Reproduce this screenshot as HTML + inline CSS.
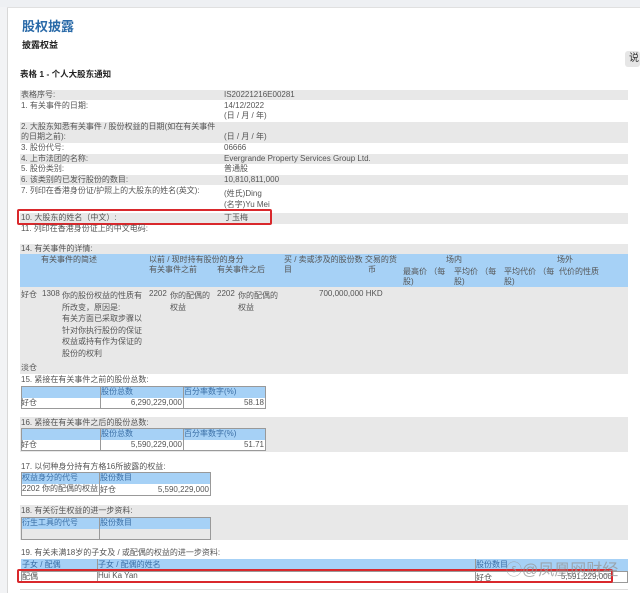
<!DOCTYPE html>
<html><head><meta charset="utf-8"><style>
*{margin:0;padding:0;box-sizing:border-box}
body{width:640px;height:593px;background:#fff;position:relative;overflow:hidden;font-family:"Liberation Sans","Noto Sans CJK SC",sans-serif;font-size:8px;color:#555;line-height:10px}
.a{position:absolute;white-space:nowrap}
.g{position:absolute;background:#e8e8e8}
.b{position:absolute;background:#a6d1f6}
.bl{color:#3a6ea5}
.bx{position:absolute;border:1px solid #999}
.cl{position:absolute;background:#999;width:1px}
.red{position:absolute;border:2px solid #d9282c;border-radius:2px}
</style></head><body>
<div class="a" style="left:0;top:0;width:640px;height:7px;background:#eef0f3"></div>
<div class="a" style="left:0;top:7px;width:7px;height:586px;background:#f2f3f5"></div>
<div class="a" style="left:7px;top:7px;width:1px;height:586px;background:#d8d8d8"></div>
<div class="a" style="left:7px;top:7px;width:633px;height:1px;background:#e0e0e0"></div>
<div class="a" style="left:22px;top:19px;font-size:13px;line-height:16px;color:#2a6aa8;font-weight:bold">股权披露</div>
<div class="a" style="left:22px;top:40px;font-size:9px;color:#222;font-weight:bold">披露权益</div>
<div class="a" style="left:625px;top:51px;width:15px;height:16px;background:#e6e6e6;border-radius:3px;font-size:10px;line-height:16px;color:#333;padding-left:4px">说</div>
<div class="a" style="left:20px;top:69px;font-size:8.5px;color:#222;font-weight:bold">表格 1 - 个人大股东通知</div>

<div class="g" style="left:20px;top:90px;width:608px;height:10px"></div>
<div class="a" style="left:21px;top:90px">表格序号:</div><div class="a" style="left:224px;top:90px">IS20221216E00281</div>
<div class="a" style="left:21px;top:101px">1. 有关事件的日期:</div><div class="a" style="left:224px;top:101px">14/12/2022</div>
<div class="a" style="left:224px;top:111px">(日 / 月 / 年)</div>
<div class="g" style="left:20px;top:122px;width:608px;height:21px"></div>
<div class="a" style="left:21px;top:122px">2. 大股东知悉有关事件 / 股份权益的日期(如在有关事件</div>
<div class="a" style="left:21px;top:132px">的日期之前):</div><div class="a" style="left:224px;top:132px">(日 / 月 / 年)</div>
<div class="a" style="left:21px;top:143px">3. 股份代号:</div><div class="a" style="left:224px;top:143px">06666</div>
<div class="g" style="left:20px;top:154px;width:608px;height:10px"></div>
<div class="a" style="left:21px;top:154px">4. 上市法团的名称:</div><div class="a" style="left:224px;top:154px">Evergrande Property Services Group Ltd.</div>
<div class="a" style="left:21px;top:164px">5. 股份类别:</div><div class="a" style="left:224px;top:164px">普通股</div>
<div class="g" style="left:20px;top:175px;width:608px;height:10px"></div>
<div class="a" style="left:21px;top:175px">6. 该类别的已发行股份的数目:</div><div class="a" style="left:224px;top:175px">10,810,811,000</div>
<div class="a" style="left:21px;top:186px">7. 列印在香港身份证/护照上的大股东的姓名(英文):</div>
<div class="a" style="left:224px;top:189px">(姓氏)Ding</div><div class="a" style="left:224px;top:200px">(名字)Yu Mei</div>
<div class="g" style="left:20px;top:213px;width:608px;height:11px"></div>
<div class="a" style="left:21px;top:213px">10. 大股东的姓名（中文）:</div><div class="a" style="left:224px;top:213px">丁玉梅</div>
<div class="red" style="left:17px;top:209px;width:255px;height:16px"></div>
<div class="a" style="left:21px;top:224px">11. 列印在香港身份证上的中文电码:</div>

<div class="g" style="left:20px;top:244px;width:608px;height:130px"></div>
<div class="a" style="left:21px;top:244px">14. 有关事件的详情:</div>
<div class="b" style="left:20px;top:254px;width:608px;height:33px"></div>
<div class="a" style="left:41px;top:255px">有关事件的简述</div>
<div class="a" style="left:149px;top:255px">以前 / 现时持有股份的身分</div>
<div class="a" style="left:149px;top:265px">有关事件之前</div><div class="a" style="left:217px;top:265px">有关事件之后</div>
<div class="a" style="left:284px;top:255px">买 / 卖或涉及的股份数 交易的货</div>
<div class="a" style="left:284px;top:265px">目</div><div class="a" style="left:368px;top:265px">币</div>
<div class="a" style="left:446px;top:255px">场内</div><div class="a" style="left:557px;top:255px">场外</div>
<div class="a" style="left:403px;top:267px">最高价 （每</div><div class="a" style="left:403px;top:277px">股)</div>
<div class="a" style="left:454px;top:267px">平均价 （每</div><div class="a" style="left:454px;top:277px">股)</div>
<div class="a" style="left:504px;top:267px">平均代价 （每</div><div class="a" style="left:504px;top:277px">股)</div>
<div class="a" style="left:559px;top:267px">代价的性质</div>
<div class="a" style="left:21px;top:290px">好仓</div><div class="a" style="left:42px;top:289px">1308</div>
<div class="a" style="left:62px;top:290px;line-height:11.5px">你的股份权益的性质有<br>所改变，原因是:<br>有关方面已采取步骤以<br>针对你执行股份的保证<br>权益或持有作为保证的<br>股份的权利</div>
<div class="a" style="left:149px;top:289px">2202</div><div class="a" style="left:170px;top:290px;line-height:11.5px">你的配偶的<br>权益</div>
<div class="a" style="left:217px;top:289px">2202</div><div class="a" style="left:238px;top:290px;line-height:11.5px">你的配偶的<br>权益</div>
<div class="a" style="left:319px;top:289px">700,000,000 HKD</div>
<div class="a" style="left:21px;top:363px">淡仓</div>

<div class="a" style="left:21px;top:375px">15. 紧接在有关事件之前的股份总数:</div>
<div class="b" style="left:21px;top:386px;width:244px;height:12px"></div>
<div class="bx" style="left:21px;top:386px;width:245px;height:23px"></div>
<div class="cl" style="left:100px;top:386px;height:23px"></div><div class="cl" style="left:183px;top:386px;height:23px"></div>
<div class="a bl" style="left:101px;top:387px">股份总数</div><div class="a bl" style="left:184px;top:387px">百分率数字(%)</div>
<div class="a" style="left:21px;top:398px">好仓</div><div class="a" style="left:100px;top:398px;width:82px;text-align:right">6,290,229,000</div><div class="a" style="left:183px;top:398px;width:81px;text-align:right">58.18</div>

<div class="g" style="left:20px;top:417px;width:608px;height:35px"></div>
<div class="a" style="left:21px;top:418px">16. 紧接在有关事件之后的股份总数:</div>
<div class="b" style="left:21px;top:428px;width:244px;height:12px"></div>
<div class="a" style="left:21px;top:440px;width:244px;height:11px;background:#fff"></div>
<div class="bx" style="left:21px;top:428px;width:245px;height:23px"></div>
<div class="cl" style="left:100px;top:428px;height:23px"></div><div class="cl" style="left:183px;top:428px;height:23px"></div>
<div class="a bl" style="left:101px;top:429px">股份总数</div><div class="a bl" style="left:184px;top:429px">百分率数字(%)</div>
<div class="a" style="left:21px;top:440px">好仓</div><div class="a" style="left:100px;top:440px;width:82px;text-align:right">5,590,229,000</div><div class="a" style="left:183px;top:440px;width:81px;text-align:right">51.71</div>

<div class="a" style="left:21px;top:462px">17. 以何种身分持有方格16所披露的权益:</div>
<div class="b" style="left:21px;top:472px;width:189px;height:12px"></div>
<div class="bx" style="left:21px;top:472px;width:190px;height:24px"></div>
<div class="cl" style="left:99px;top:472px;height:24px"></div>
<div class="a bl" style="left:22px;top:473px">权益身分的代号</div><div class="a bl" style="left:100px;top:473px">股份数目</div>
<div class="a" style="left:22px;top:484px">2202 你的配偶的权益</div><div class="a" style="left:100px;top:485px">好仓</div><div class="a" style="left:130px;top:485px;width:79px;text-align:right">5,590,229,000</div>

<div class="g" style="left:20px;top:505px;width:608px;height:35px"></div>
<div class="a" style="left:21px;top:506px">18. 有关衍生权益的进一步资料:</div>
<div class="b" style="left:21px;top:517px;width:189px;height:12px"></div>
<div class="bx" style="left:21px;top:517px;width:190px;height:23px"></div>
<div class="cl" style="left:99px;top:517px;height:23px"></div>
<div class="a bl" style="left:22px;top:518px">衍生工具的代号</div><div class="a bl" style="left:100px;top:518px">股份数目</div>

<div class="a" style="left:21px;top:548px">19. 有关未满18岁的子女及 / 或配偶的权益的进一步资料:</div>
<div class="b" style="left:21px;top:559px;width:607px;height:12px"></div>
<div class="a" style="left:21px;top:571px;width:607px;height:12px;border:1px solid #999"></div>
<div class="cl" style="left:97px;top:559px;height:24px"></div><div class="cl" style="left:475px;top:559px;height:24px"></div>
<div class="a bl" style="left:22px;top:560px">子女 / 配偶</div><div class="a bl" style="left:98px;top:560px">子女 / 配偶的姓名</div><div class="a bl" style="left:476px;top:560px">股份数目</div>
<div class="a" style="left:22px;top:572px">配偶</div><div class="a" style="left:98px;top:571px">Hui Ka Yan</div><div class="a" style="left:476px;top:573px">好仓</div><div class="a" style="left:520px;top:572px;width:92px;text-align:right">5,591,229,000</div>
<div class="red" style="left:17px;top:569px;width:596px;height:14px"></div>
<div class="a" style="left:506px;top:561px;font-size:16px;line-height:19px;color:rgba(150,150,150,0.75)">ⓢ@凤凰网财经</div>
<div class="a" style="left:20px;top:589px;width:608px;height:1px;background:#ddd"></div>
</body></html>
